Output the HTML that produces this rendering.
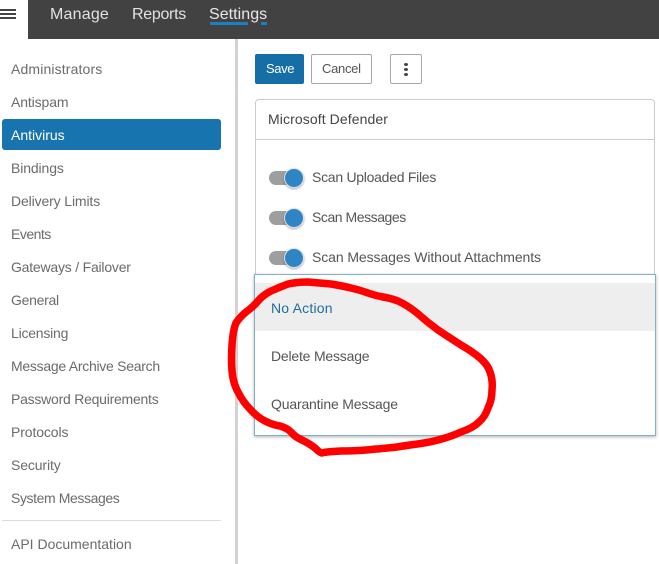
<!DOCTYPE html>
<html><head><meta charset="utf-8">
<style>
html,body{margin:0;padding:0;background:#fff}
#p{position:relative;width:659px;height:564px;overflow:hidden;background:#fff;font-family:"Liberation Sans",sans-serif;font-size:14px;color:#666}
#p div,#p span{position:absolute;box-sizing:border-box}
.t{white-space:nowrap;line-height:18px;height:18px}
.n{left:11px;color:#6b6b6b}
.track{left:269px;width:24px;height:14px;background:#9e9e9e;border-radius:7px}
.knob{left:284px;width:20px;height:20px;background:#2f84c4;border-radius:50%;border:1px solid #e4e4e4;box-shadow:0 1px 2px rgba(0,0,0,.35)}
.l{left:312px;color:#555}
</style></head><body>
<div id="p">
<div style="left:28px;top:0;width:631px;height:39px;background:#424242"></div>
<div style="left:0;top:9px;width:16px;height:2px;background:#444"></div>
<div style="left:0;top:13px;width:16px;height:2px;background:#444"></div>
<div style="left:0;top:17px;width:16px;height:2px;background:#444"></div>
<div class="t" style="left:50px;top:5px;height:20px;line-height:20px;font-size:16px;color:#e2e2e2;letter-spacing:.2px">Manage</div>
<div class="t" style="left:132px;top:5px;height:20px;line-height:20px;font-size:16px;color:#e2e2e2;letter-spacing:-.3px">Reports</div>
<div class="t" style="left:209px;top:5px;height:20px;line-height:20px;font-size:16px;color:#e8e8e8;letter-spacing:.05px">Settings</div>
<div style="left:210px;top:22px;width:38px;height:3px;background:#1b7fc4"></div>
<div style="left:261px;top:22px;width:6px;height:3px;background:#1b7fc4"></div>

<div style="left:235px;top:39px;width:3px;height:525px;background:#d2d2d2"></div>

<div class="t n" style="top:60px;letter-spacing:.14px">Administrators</div>
<div class="t n" style="top:93px;letter-spacing:-.12px">Antispam</div>
<div style="left:2px;top:119px;width:219px;height:31px;background:#1874ae;border-radius:3px"></div>
<div class="t n" style="top:126px;color:#fff">Antivirus</div>
<div class="t n" style="top:159px;letter-spacing:-.12px">Bindings</div>
<div class="t n" style="top:192px;letter-spacing:-.13px">Delivery Limits</div>
<div class="t n" style="top:225px;letter-spacing:-.5px">Events</div>
<div class="t n" style="top:258px;letter-spacing:-.21px">Gateways / Failover</div>
<div class="t n" style="top:291px;letter-spacing:-.28px">General</div>
<div class="t n" style="top:324px;letter-spacing:-.22px">Licensing</div>
<div class="t n" style="top:357px;letter-spacing:-.27px">Message Archive Search</div>
<div class="t n" style="top:390px;letter-spacing:-.24px">Password Requirements</div>
<div class="t n" style="top:423px;letter-spacing:-.11px">Protocols</div>
<div class="t n" style="top:456px;letter-spacing:-.12px">Security</div>
<div class="t n" style="top:489px;letter-spacing:-.4px">System Messages</div>
<div style="left:2px;top:520px;width:219px;height:1px;background:#ddd"></div>
<div class="t n" style="top:535px">API Documentation</div>

<div style="left:255px;top:54px;width:49px;height:30px;background:#166ea6;border-radius:2px"></div>
<div class="t" style="left:266px;top:60px;font-size:13px;color:#fff;letter-spacing:-.4px">Save</div>
<div style="left:311px;top:54px;width:61px;height:30px;background:#fff;border:1px solid #a8a8a8;border-radius:2px"></div>
<div class="t" style="left:322px;top:60px;font-size:13px;color:#555;letter-spacing:-.3px">Cancel</div>
<div style="left:390px;top:54px;width:32px;height:30px;background:#fff;border:1px solid #a8a8a8;border-radius:2px"></div>
<div style="left:404px;top:63px;width:4px;height:3px;background:#444;border-radius:50%"></div>
<div style="left:404px;top:68px;width:4px;height:3px;background:#444;border-radius:50%"></div>
<div style="left:404px;top:73px;width:4px;height:3px;background:#444;border-radius:50%"></div>

<div style="left:255px;top:99px;width:400px;height:200px;background:#fff;border:1px solid #ccc;border-radius:4px 4px 0 0"></div>
<div style="left:256px;top:139px;width:398px;height:1px;background:#ccc"></div>
<div class="t" style="left:268px;top:110px;color:#444;letter-spacing:.1px">Microsoft Defender</div>

<div class="track" style="top:171px"></div><div class="knob" style="top:168px"></div>
<div class="t l" style="top:168px;letter-spacing:-.27px">Scan Uploaded Files</div>
<div class="track" style="top:211px"></div><div class="knob" style="top:208px"></div>
<div class="t l" style="top:208px;letter-spacing:-.45px">Scan Messages</div>
<div class="track" style="top:251px"></div><div class="knob" style="top:248px"></div>
<div class="t l" style="top:248px;letter-spacing:-.09px">Scan Messages Without Attachments</div>

<div style="left:254px;top:274px;width:402px;height:162px;background:#fff;border:1px solid #7fb2c6;box-shadow:0 1px 3px rgba(0,0,0,.3)"></div>
<div style="left:255px;top:283px;width:400px;height:48px;background:#eee"></div>
<div class="t" style="left:271px;top:299px;color:#1f6d99;letter-spacing:.2px">No Action</div>
<div class="t" style="left:271px;top:347px;color:#555;letter-spacing:-.2px">Delete Message</div>
<div class="t" style="left:271px;top:395px;color:#555;letter-spacing:-.17px">Quarantine Message</div>

<svg width="659" height="564" style="position:absolute;left:0;top:0" fill="none">
<path d="M331 284 Q320 283 308 282 Q297 282 288 284 Q280 287 271 291 Q263 295 258 301 Q253 307 246 312 Q240 317 236 323 Q233 330 232 345 Q231 360 232 371 Q233 383 238 392 Q243 402 250 409 Q257 417 265 421 Q273 425 280 426 Q287 428 291 432 Q295 437 302 440 Q310 444 315 448 Q320 453 322 453 Q323 452 341 451 Q360 451 376 449 Q393 448 410 445 Q427 443 438 440 Q450 437 461 432 Q473 428 479 422 Q485 417 488 408 Q492 400 492 390 Q493 380 490 372 Q488 365 480 358 Q473 352 461 345 Q450 338 438 330 Q427 322 417 313 Q407 305 398 301 Q390 298 383 297 Q377 296 368 293 Q360 290 351 288 Q343 286 331 284 Z" stroke="#fe0000" stroke-width="7.5" stroke-linejoin="round" stroke-linecap="round"/>
</svg>
</div>
</body></html>
